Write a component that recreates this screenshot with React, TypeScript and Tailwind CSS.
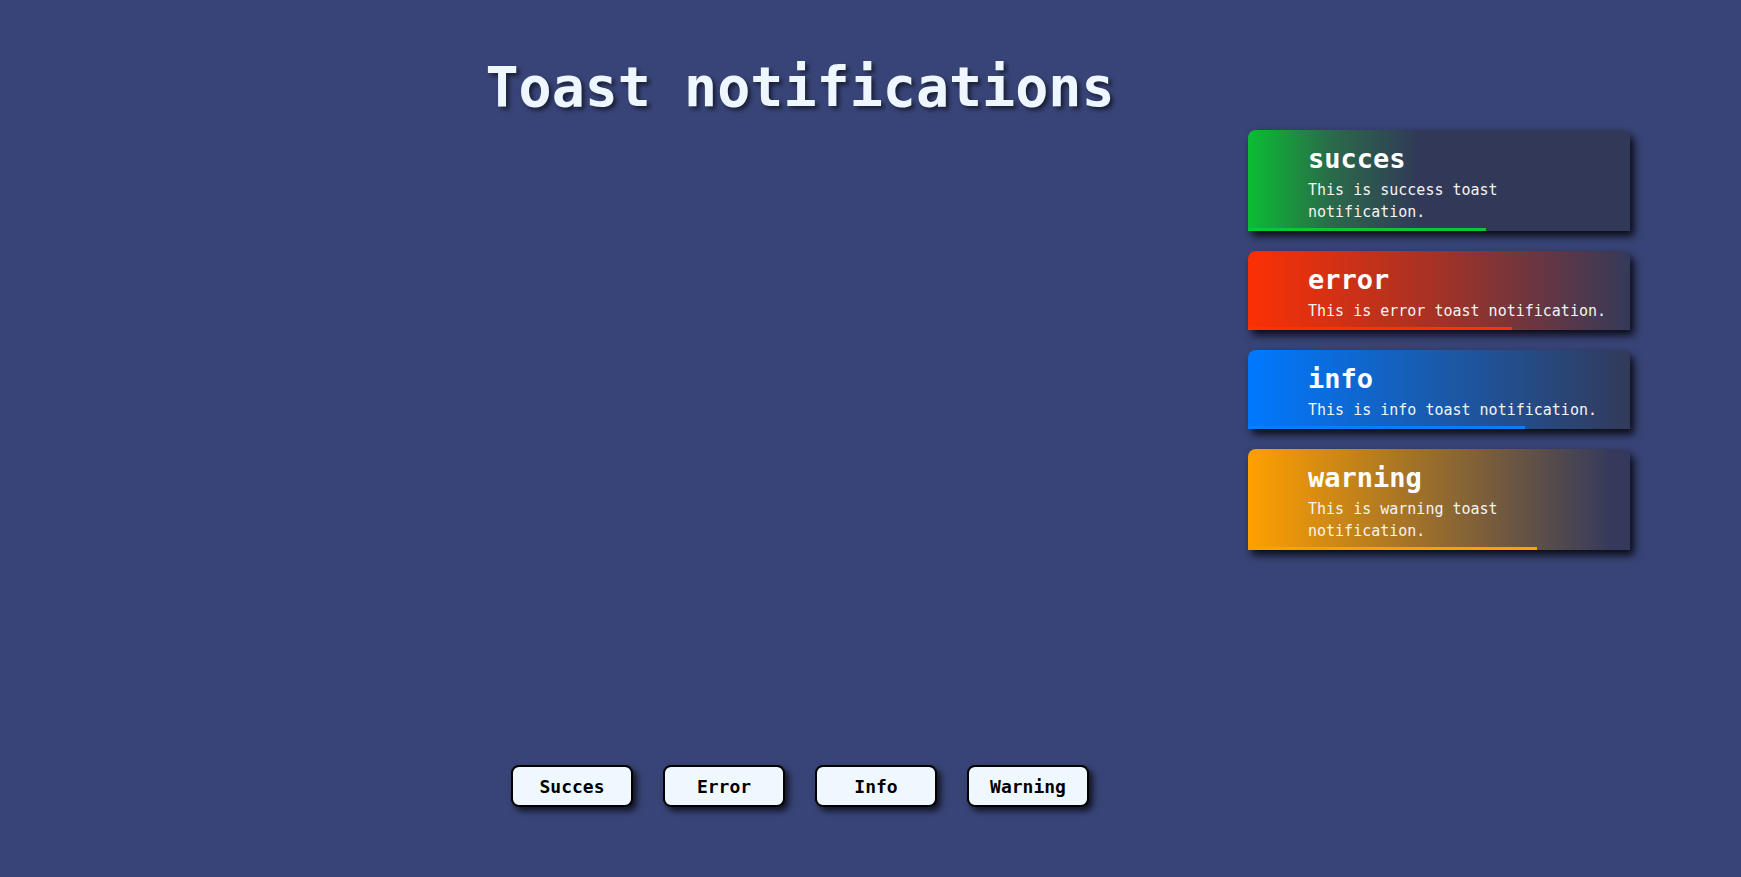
type Kind = "success" | "error" | "info" | "warning"

interface Toast {
  kind: Kind
  title: string
  text: string
  progress: number
}

const toasts: Toast[] = [
  { kind: "success", title: "succes", text: "This is success toast notification.", progress: 238 },
  { kind: "error", title: "error", text: "This is error toast notification.", progress: 264 },
  { kind: "info", title: "info", text: "This is info toast notification.", progress: 277 },
  { kind: "warning", title: "warning", text: "This is warning toast notification.", progress: 289 },
]

const bgByKind: Record<Kind, string> = {
  success: "bg-[linear-gradient(to_right,#0bbd33_0%,#2a6a4a_22%,#323858_45%,#323858_100%)]",
  error: "bg-[linear-gradient(to_right,#fb3005_0%,#a33226_50%,#343a5a_100%)]",
  info: "bg-[linear-gradient(to_right,#0079ff_0%,#1a5aab_50%,#323a5a_100%)]",
  warning: "bg-[linear-gradient(to_right,#ffa000_0%,#946b2e_50%,#353a5c_95%)]",
}

const barByKind: Record<Kind, string> = {
  success: "bg-[#0cc63a]",
  error: "bg-[#ff3300]",
  info: "bg-[#0a7dff]",
  warning: "bg-[#ffa000]",
}

function ToastCard({ toast }: { toast: Toast }) {
  return (
    <div
      className={`relative w-[382px] rounded-t-lg pt-[11px] pb-[8px] pl-[60px] pr-5 text-white shadow-[4px_5px_8px_rgba(0,0,0,0.85)] ${bgByKind[toast.kind]}`}
    >
      <h3 className="text-[27px] leading-[36px] font-bold">{toast.title}</h3>
      <p className="mt-[2px] text-[15px] leading-[22px] text-[#f4f4f4]">{toast.text}</p>
      <div className={`absolute left-0 bottom-0 h-[3px] ${barByKind[toast.kind]}`} style={{ width: toast.progress }} />
    </div>
  )
}

export default function App() {
  const buttons = ["Succes", "Error", "Info", "Warning"]

  return (
    <div className="relative h-[877px] overflow-hidden bg-[#384477] font-['DejaVu_Sans_Mono',monospace]">
      <div className="flex w-[1600px] flex-col items-center">
        <h1 className="pt-[55px] text-[55px] leading-[64px] font-bold text-[#eef6ff] [text-shadow:3px_3px_4px_rgba(0,0,0,0.55)]">
          Toast notifications
        </h1>

        <div className="mt-[646px] flex gap-[30px]">
          {buttons.map(b => (
            <button
              key={b}
              type="button"
              className="h-[42px] w-[122px] rounded-lg border-2 border-black bg-[#f0f8ff] text-[18px] font-bold text-black shadow-[4px_4px_6px_rgba(0,0,0,0.7)]"
            >
              {b}
            </button>
          ))}
        </div>
      </div>

      {/* toast stack, fixed to the top right */}
      <div className="absolute top-[130px] left-[1248px] flex flex-col gap-5">
        {toasts.map(t => (
          <ToastCard key={t.kind} toast={t} />
        ))}
      </div>
    </div>
  )
}
